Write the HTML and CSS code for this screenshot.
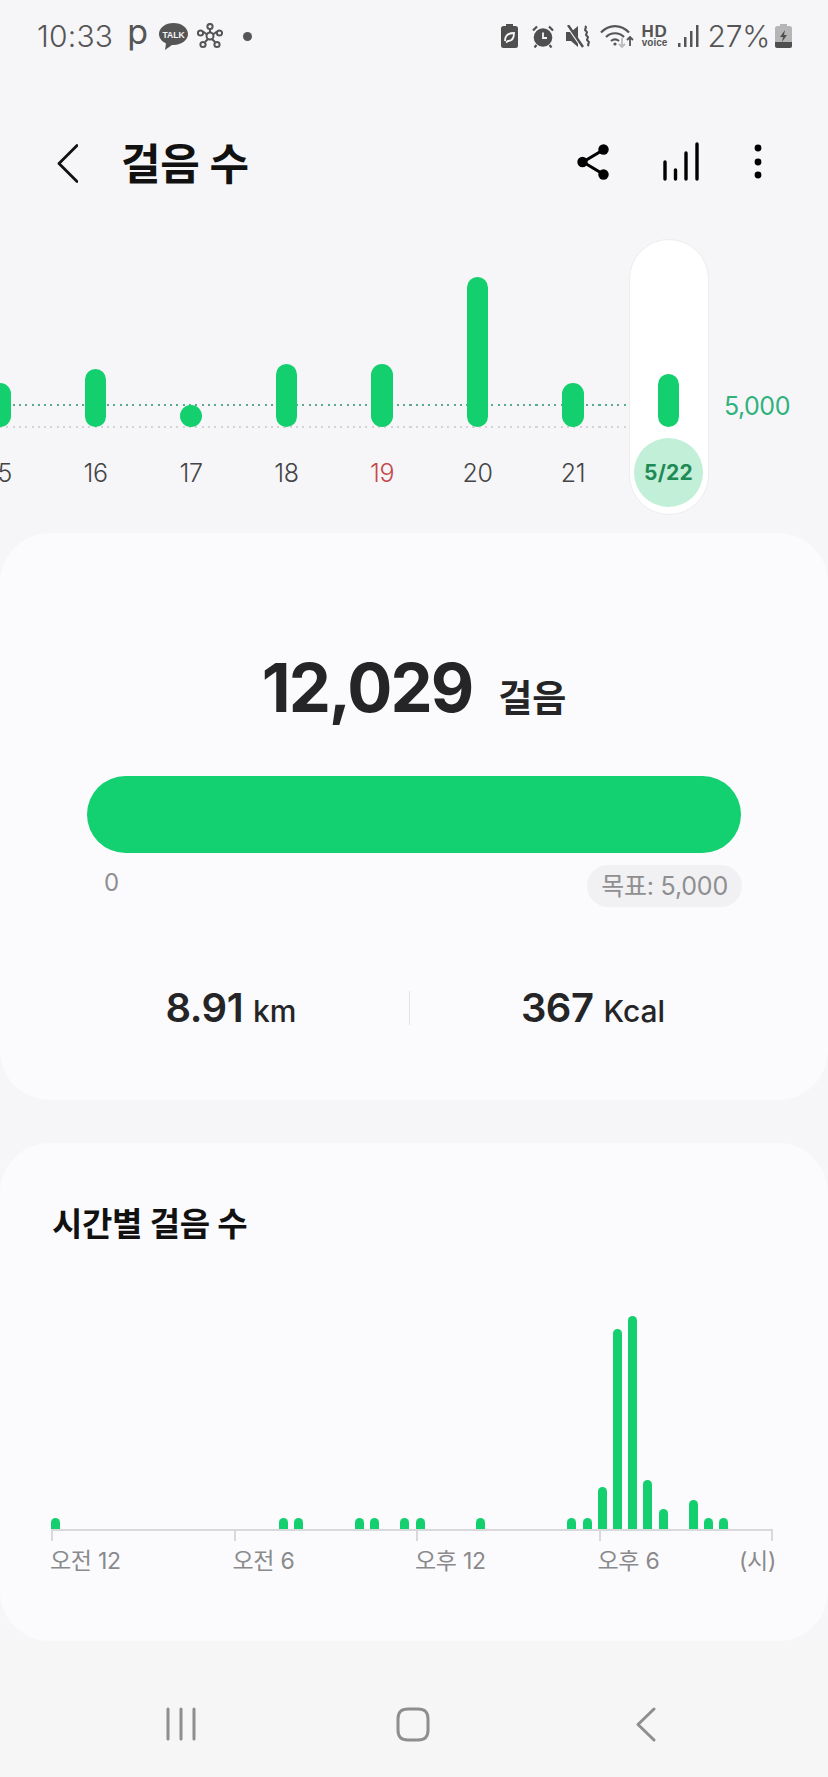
FILE: index.html
```html
<!DOCTYPE html>
<html lang="ko">
<head>
    <meta charset="UTF-8">
    <meta name="viewport" content="width=device-width, initial-scale=1.0">
    <title>걸음 수</title>
    <link rel="stylesheet" href="styles.css">
</head>
<body>
    <div class="status-bar">
        <div class="status-left">
            <span class="clock">10:33</span>
            <span class="status-p">p</span>
            <svg class="ico-talk" viewBox="0 0 29 27">
                <path d="M14.500 0C6.500 0 0 4.900 0 11c0 4 2.800 7.500 7 9.400L6 27l7-5.100h1.500C22.500 22 29 17.100 29 11S22.500 0 14.500 0z" fill="#555"/>
                <text class="talk-text" x="14.500" y="14.500" text-anchor="middle">TALK</text>
            </svg>
            <svg class="ico-hub" viewBox="0 0 26 26" fill="none" stroke="#555" stroke-width="2">
                <path d="M13 6v4M6 8.500l4 3M20 8.500l-4 3M8 19l3-3M18 19l-3-3"/>
                <circle cx="13" cy="3.500" r="2.600"/>
                <circle cx="3.500" cy="10" r="2.600"/>
                <circle cx="22.500" cy="10" r="2.600"/>
                <circle cx="6" cy="21.500" r="2.600"/>
                <circle cx="20" cy="21.500" r="2.600"/>
                <circle cx="13" cy="13" r="3.500"/>
            </svg>
            <span class="status-dot"></span>
        </div>
        <div class="status-right">
            <svg class="ico-batt-leaf" viewBox="0 0 17 24">
                <path d="M5 0h7v2h2.500A2.500 2.500 0 0 1 17 4.500v17a2.500 2.500 0 0 1-2.500 2.500h-12A2.500 2.500 0 0 1 0 21.500v-17A2.500 2.500 0 0 1 2.500 2H5z" fill="#4f4f4f"/>
                <path d="M4 17c0-5 3-8 9-8 0 6-3 8-6 8l-2 1.500" fill="none" stroke="#f6f6f8" stroke-width="1.800"/>
            </svg>
            <svg class="ico-alarm" viewBox="0 0 22 23">
                <circle cx="11" cy="12.500" r="9.300" fill="#4f4f4f"/>
                <path d="M11 7.500v5.500h4" fill="none" stroke="#f6f6f8" stroke-width="1.800"/>
                <path d="M1 5.500L5 1.500M21 5.500L17 1.500M4.500 20l-2 2.500M17.500 20l2 2.500" stroke="#4f4f4f" stroke-width="2.200"/>
            </svg>
            <svg class="ico-mute" viewBox="0 0 24 23">
                <path d="M0 7h5l7-6v21l-7-6H0z" fill="#4f4f4f"/>
                <path d="M1 0l15 22" stroke="#f6f6f8" stroke-width="3"/>
                <path d="M2 0l15 22" stroke="#4f4f4f" stroke-width="2.400"/>
                <path d="M19 1c3 2-2 3 1 5s-2 3 1 5-2 3 1 5-2 3 1 5" fill="none" stroke="#4f4f4f" stroke-width="2"/>
            </svg>
            <svg class="ico-wifi" viewBox="0 0 35 24" fill="none" stroke="#555" stroke-width="2.200">
                <path d="M1 8.500c8-8.500 20-8.500 28 0"/>
                <path d="M6 13c5-5 13-5 18 0"/>
                <path d="M11 17c2.500-2 5.500-2 8 0"/>
                <circle cx="15" cy="20" r="1.600" fill="#555" stroke="none"/>
                <path d="M22 14v9M19 20l3 3 3-3" stroke="#bbb" stroke-width="1.800"/>
                <path d="M30 22v-9M27 16l3-3 3 3" stroke-width="1.800"/>
            </svg>
            <span class="hd-voice"><b>HD</b><i>voice</i></span>
            <svg class="ico-signal" viewBox="0 0 21 22" fill="#555">
                <rect x="0" y="18" width="2.500" height="4"/>
                <rect x="6" y="12" width="2.500" height="10"/>
                <rect x="12" y="6" width="2.500" height="16"/>
                <rect x="18" y="0" width="2.500" height="22"/>
            </svg>
            <span class="battery-pct">27%</span>
            <svg class="ico-batt" viewBox="0 0 17 24">
                <path d="M5 0h7v2h2.500A2.500 2.500 0 0 1 17 4.500v17a2.500 2.500 0 0 1-2.500 2.500h-12A2.500 2.500 0 0 1 0 21.500v-17A2.500 2.500 0 0 1 2.500 2H5z" fill="#b5b5b5"/>
                <path d="M0 18h17v3.500a2.500 2.500 0 0 1-2.500 2.500h-12A2.500 2.500 0 0 1 0 21.500z" fill="#4f4f4f"/>
                <path d="M10 6l-5 7h3l-1 5 5-7H9z" fill="#4f4f4f"/>
            </svg>
        </div>
    </div>

    <div class="app-bar">
        <svg class="ico-back" viewBox="0 0 21 39" fill="none" stroke="#111" stroke-width="2.800" stroke-linecap="round" stroke-linejoin="round">
            <path d="M20 1.500L2 19.500l18 18"/>
        </svg>
        <h1 class="title">걸음 수</h1>
        <svg class="ico-share" viewBox="0 0 32 36">
            <path d="M6 18L26 6M6 18l20 12" stroke="#000" stroke-width="3.200" fill="none"/>
            <circle cx="5.500" cy="18" r="5.200"/>
            <circle cx="26.500" cy="5.500" r="5.200"/>
            <circle cx="26.500" cy="30.500" r="5.200"/>
        </svg>
        <svg class="ico-chart" viewBox="0 0 36 39" stroke="#000" stroke-width="3.400" stroke-linecap="round">
            <path d="M2 20v17M12.500 28v9M23 11v26M34 2v35"/>
        </svg>
        <svg class="ico-more" viewBox="0 0 8 36">
            <circle cx="4" cy="4" r="3.400"/>
            <circle cx="4" cy="18" r="3.400"/>
            <circle cx="4" cy="31" r="3.400"/>
        </svg>
    </div>

    <div class="week">
        <div class="goal-line"></div>
        <div class="base-line"></div>
        <span class="goal-label">5,000</span>
        <div class="days">
            <div class="day"><div class="plot"><span class="bar" style="height:44px"></span></div><span class="day-label">15</span></div>
            <div class="day"><div class="plot"><span class="bar" style="height:58px"></span></div><span class="day-label">16</span></div>
            <div class="day"><div class="plot"><span class="bar" style="height:22px"></span></div><span class="day-label">17</span></div>
            <div class="day"><div class="plot"><span class="bar" style="height:63px"></span></div><span class="day-label">18</span></div>
            <div class="day"><div class="plot"><span class="bar" style="height:63px"></span></div><span class="day-label holiday">19</span></div>
            <div class="day"><div class="plot"><span class="bar" style="height:150px"></span></div><span class="day-label">20</span></div>
            <div class="day"><div class="plot"><span class="bar" style="height:44px"></span></div><span class="day-label">21</span></div>
            <div class="day today"><div class="plot"><span class="bar" style="height:53px"></span></div><span class="day-label">5/22</span></div>
        </div>
    </div>

    <section class="card summary">
        <div class="total"><span class="total-num">12,029</span><span class="total-unit">걸음</span></div>
        <div class="progress"></div>
        <div class="progress-labels">
            <span class="zero">0</span>
            <span class="goal-pill">목표: 5,000</span>
        </div>
        <div class="stats">
            <div class="stat"><b>8.91</b><span>km</span></div>
            <div class="stat-sep"></div>
            <div class="stat"><b>367</b><span>Kcal</span></div>
        </div>
    </section>

    <section class="card hourly">
        <h2 class="hourly-title">시간별 걸음 수</h2>
        <div class="hour-bars">
            <i style="grid-column:1;height:11px"></i>
            <i style="grid-column:16;height:11px"></i>
            <i style="grid-column:17;height:11px"></i>
            <i style="grid-column:21;height:11px"></i>
            <i style="grid-column:22;height:11px"></i>
            <i style="grid-column:24;height:11px"></i>
            <i style="grid-column:25;height:11px"></i>
            <i style="grid-column:29;height:11px"></i>
            <i style="grid-column:35;height:11px"></i>
            <i style="grid-column:36;height:11px"></i>
            <i style="grid-column:37;height:42px"></i>
            <i style="grid-column:38;height:200px"></i>
            <i style="grid-column:39;height:213px"></i>
            <i style="grid-column:40;height:49px"></i>
            <i style="grid-column:41;height:20px"></i>
            <i style="grid-column:43;height:29px"></i>
            <i style="grid-column:44;height:11px"></i>
            <i style="grid-column:45;height:11px"></i>
        </div>
        <div class="hour-axis">
            <div class="axis-cell"><span class="tick"></span><span class="axis-label">오전 12</span></div>
            <div class="axis-cell"><span class="tick"></span><span class="axis-label">오전 6</span></div>
            <div class="axis-cell"><span class="tick"></span><span class="axis-label">오후 12</span></div>
            <div class="axis-cell last"><span class="tick"></span><span class="axis-label">오후 6</span><span class="tick end"></span><span class="axis-label unit">(시)</span></div>
        </div>
    </section>

    <div class="nav-bar">
        <svg class="ico-recent" viewBox="0 0 30 34" stroke="#8e8e8e" stroke-width="3" stroke-linecap="round">
            <path d="M2 2v30M15 2v30M28 2v30"/>
        </svg>
        <svg class="ico-home" viewBox="0 0 34 35" fill="none" stroke="#8e8e8e" stroke-width="3">
            <path d="M12 2h10c7 0 10 3 10 10v11c0 7-3 10-10 10H12C5 33 2 30 2 23V12C2 5 5 2 12 2z"/>
        </svg>
        <svg class="ico-navback" viewBox="0 0 20 35" fill="none" stroke="#8e8e8e" stroke-width="3" stroke-linecap="round" stroke-linejoin="round">
            <path d="M18 2L2 17.500 18 33"/>
        </svg>
    </div>
</body>
</html>
```

FILE: styles.css
```css
/* General styles */
html, body {
    margin: 0;
    padding: 0;
}

body {
    width: 828px;
    height: 1777px;
    overflow: hidden;
    font-family: Inter, "Noto Sans CJK KR", sans-serif;
    background-color: #f6f6f8;
    color: #252527;
}

svg {
    display: block;
    flex: none;
}

/* Status bar */
.status-bar {
    height: 72px;
    display: flex;
    justify-content: space-between;
    align-items: center;
    padding: 0 36px 0 37px;
    color: #555;
}

.status-left, .status-right {
    display: flex;
    align-items: center;
}

.clock {
    font-size: 30px;
    font-weight: 300;
    letter-spacing: 0.2px;
}

.status-p {
    margin-left: 14px;
    font-size: 34px;
    line-height: 30px;
    margin-top: -8px;
    font-weight: 400;
}

.ico-talk {
    width: 29px;
    height: 27px;
    margin-left: 11px;
}

.talk-text {
    font-family: "Liberation Sans", sans-serif;
    font-size: 8.500px;
    font-weight: 700;
    fill: #f6f6f8;
}

.ico-hub {
    width: 26px;
    height: 26px;
    margin-left: 9px;
}

.status-dot {
    width: 9px;
    height: 9px;
    border-radius: 50%;
    background-color: #555;
    margin-left: 20px;
}

.ico-batt-leaf {
    width: 17px;
    height: 24px;
}

.ico-alarm {
    width: 22px;
    height: 23px;
    margin-left: 14px;
}

.ico-mute {
    width: 24px;
    height: 23px;
    margin-left: 12px;
}

.ico-wifi {
    width: 35px;
    height: 24px;
    margin-left: 10px;
}

.hd-voice {
    display: flex;
    flex-direction: column;
    align-items: center;
    width: 28px;
    margin-left: 6px;
    font-family: "Liberation Sans", sans-serif;
    line-height: 1;
}

.hd-voice b {
    font-size: 17px;
    line-height: 13px;
    letter-spacing: 0.8px;
}

.hd-voice i {
    font-style: normal;
    font-weight: 700;
    font-size: 10px;
    line-height: 10px;
}

.ico-signal {
    width: 21px;
    height: 22px;
    margin-left: 9px;
}

.battery-pct {
    font-size: 30px;
    font-weight: 300;
    margin-left: 9px;
    letter-spacing: -0.3px;
}

.ico-batt {
    width: 17px;
    height: 24px;
    margin-left: 5px;
}

/* App bar */
.app-bar {
    height: 152px;
    padding-top: 15px;
    display: flex;
    align-items: center;
}

.ico-back {
    width: 21px;
    height: 39px;
    margin-left: 57px;
}

.title {
    margin: -4px 0 0 43px;
    font-size: 43px;
    font-weight: 700;
    color: #111;
    flex: 1;
    letter-spacing: -0.3px;
}

.ico-share {
    width: 32px;
    height: 36px;
    margin-top: -3px;
}

.ico-chart {
    width: 36px;
    height: 39px;
    margin-left: 54px;
    margin-top: -3px;
}

.ico-more {
    width: 8px;
    height: 36px;
    margin-left: 55px;
    margin-right: 66px;
    margin-top: -3px;
}

/* Week chart */
.week {
    position: relative;
    width: 828px;
    height: 276px;
}

.days {
    display: flex;
    margin-left: -47.750px;
}

.goal-line, .base-line {
    position: absolute;
    left: 0;
    width: 630px;
    height: 2px;
}

.goal-line {
    top: 165px;
    background-image: repeating-linear-gradient(90deg, #5aab8c 0 2px, transparent 2px 6.300px);
}

.base-line {
    top: 187px;
    background-image: repeating-linear-gradient(90deg, #d4d4d6 0 2px, transparent 2px 6.300px);
}

.goal-label {
    position: absolute;
    left: 724px;
    top: 152px;
    font-size: 25px;
    line-height: 30px;
    color: #2fb27c;
    font-weight: 400;
    letter-spacing: -0.5px;
}

.day {
    position: relative;
    flex: none;
    width: 95.500px;
    display: flex;
    flex-direction: column;
    align-items: center;
}

.plot {
    width: 100%;
    height: 188px;
    display: flex;
    justify-content: center;
    align-items: flex-end;
    flex: none;
}

.bar {
    width: 21.500px;
    background-color: #13cf6e;
    border-radius: 11px;
}

.day-label {
    width: 69px;
    height: 69px;
    margin-top: 11px;
    display: flex;
    align-items: center;
    justify-content: center;
    font-size: 25px;
    font-weight: 300;
    color: #444446;
    letter-spacing: -0.4px;
}

.holiday {
    color: #c44a4a;
}

.today::before {
    content: "";
    position: absolute;
    left: 7.750px;
    top: 0;
    width: 80px;
    height: 276px;
    box-sizing: border-box;
    background-color: #fff;
    border: 1px solid #ededee;
    border-radius: 40px;
}

.today .plot, .today .day-label {
    position: relative;
}

.today .day-label {
    background-color: #c1efd8;
    border-radius: 50%;
    color: #1f8a55;
    font-size: 21px;
    font-weight: 700;
    letter-spacing: 0.2px;
}

/* Cards */
.card {
    background-color: #fbfbfd;
    border-radius: 50px;
}

.summary {
    margin-top: 18px;
    height: 567px;
    box-sizing: border-box;
    padding: 111px 87px 0;
}

.total {
    height: 88px;
    display: flex;
    justify-content: center;
    align-items: baseline;
    line-height: 88px;
}

.total-num {
    font-size: 67px;
    font-weight: 700;
    letter-spacing: -2px;
}

.total-unit {
    margin-left: 26px;
    font-size: 37px;
    font-weight: 700;
}

.progress {
    margin-top: 44px;
    height: 77px;
    background-color: #13d070;
    border-radius: 39px;
}

.progress-labels {
    display: flex;
    justify-content: space-between;
    margin-top: 12px;
}

.zero {
    margin-left: 17px;
    margin-top: 3px;
    font-size: 24px;
    line-height: 30px;
    color: #8f8f91;
}

.goal-pill {
    height: 42px;
    padding: 0 14px;
    margin-right: -1px;
    line-height: 42px;
    border-radius: 21px;
    background-color: #f1f1f3;
    font-size: 25px;
    color: #8f8f91;
    letter-spacing: -0.2px;
}

.stats {
    margin: 76px -52px 0 -34px;
    display: grid;
    grid-template-columns: 356px 1px 366px;
    align-items: center;
    height: 36px;
}

.stat {
    display: flex;
    justify-content: center;
    align-items: baseline;
    gap: 10px;
}

.stat b {
    font-size: 40px;
    font-weight: 600;
    letter-spacing: -0.5px;
}

.stat span {
    font-size: 30px;
    font-weight: 500;
}

.stat-sep {
    width: 1px;
    height: 34px;
    background-color: #e4e4e6;
}

.hourly {
    margin-top: 43px;
    height: 498px;
    box-sizing: border-box;
    padding: 61px 0 0 52px;
}

.hourly-title {
    margin: 0;
    font-size: 33px;
    font-weight: 700;
    line-height: 40px;
    color: #111;
    letter-spacing: -0.3px;
}

.hour-bars {
    margin: 72px 0 0 -4px;
    height: 213px;
    display: grid;
    grid-template-columns: repeat(48, 15.190px);
    align-items: end;
}

.hour-bars i {
    grid-row: 1;
    width: 9px;
    margin-left: 3px;
    background-color: #13cf6e;
    border-radius: 4.500px 4.500px 0 0;
}

.hour-axis {
    display: flex;
    width: 722px;
    margin-left: -1px;
    border-top: 2px solid #d9d9db;
}

.axis-cell {
    position: relative;
    width: 182.500px;
    height: 40px;
}

.axis-cell.last {
    width: 174.500px;
}

.tick {
    display: block;
    width: 2px;
    height: 10px;
    background-color: #d9d9db;
}

.tick.end {
    position: absolute;
    right: 0;
    top: 0;
}

.axis-label {
    display: block;
    margin: 5px 0 0 -1px;
    font-size: 23px;
    line-height: 30px;
    color: #8a8a8c;
    white-space: nowrap;
    letter-spacing: -0.3px;
}

.axis-label.unit {
    position: absolute;
    right: -3px;
    top: 10px;
    margin-top: 5px;
}

/* Navigation bar */
.nav-bar {
    height: 136px;
    background-color: #f6f6f6;
    display: flex;
    align-items: center;
    padding: 30px 0 0 166px;
    box-sizing: border-box;
}

.ico-recent {
    width: 30px;
    height: 34px;
}

.ico-home {
    width: 34px;
    height: 35px;
    margin-left: 200px;
}

.ico-navback {
    width: 20px;
    height: 35px;
    margin-left: 206px;
}
```
